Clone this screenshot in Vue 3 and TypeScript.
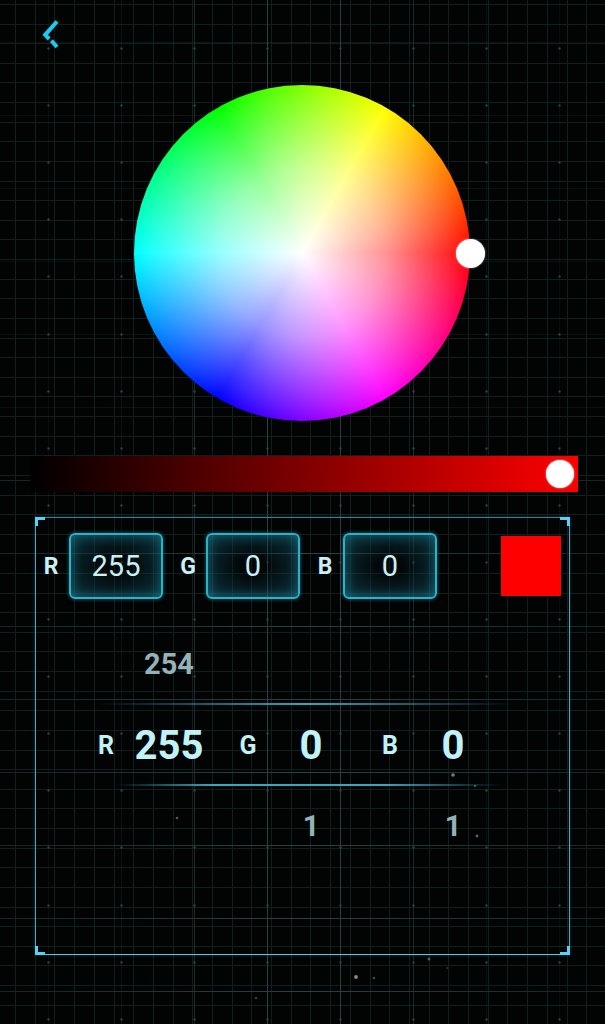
<template>
  <div class="page">
    <!-- background grid -->
    <svg class="bg" width="605" height="1024" viewBox="0 0 605 1024" aria-hidden="true">
      <defs>
        <linearGradient id="hfade" x1="0" y1="0" x2="605" y2="0" gradientUnits="userSpaceOnUse">
          <stop offset="0" stop-color="#162424" />
          <stop offset="0.5" stop-color="#2b4242" />
          <stop offset="1" stop-color="#162424" />
        </linearGradient>
      </defs>
      <line v-for="x in minorX" :key="'vm' + x" :x1="x" :x2="x" y1="0" y2="1024" class="minor" />
      <line v-for="y in minorY" :key="'hm' + y" x1="0" x2="605" :y1="y" :y2="y" class="minor" />
      <line v-for="m in majorX" :key="'vM' + m.x" :x1="m.x" :x2="m.x" y1="0" y2="1024" class="major" :opacity="m.o" />
      <rect v-for="m in majorY" :key="'hM' + m.y" x="0" :y="m.y" width="605" height="1" fill="url(#hfade)" :opacity="m.o" />
      <circle v-for="d in dots" :key="d.x + '-' + d.y" :cx="d.x" :cy="d.y" r="1.2" fill="#2f4040" />
      <circle v-for="s in stars" :key="'s' + s.x" :cx="s.x" :cy="s.y" :r="s.r" :fill="s.c" />
    </svg>

    <header class="top">
      <button type="button" class="back" aria-label="back">
        <svg width="20" height="30" viewBox="0 0 20 30">
          <path d="M16 1.5 4.2 14.8 8.2 19" fill="none" stroke="#19cdf0" stroke-width="4" />
          <path d="M10.4 20.6 16 27" fill="none" stroke="#19cdf0" stroke-width="4" />
        </svg>
      </button>
    </header>

    <div class="wheel-wrap">
      <div class="wheel">
        <span class="thumb wheel-thumb"></span>
      </div>
    </div>

    <div class="slider">
      <span class="thumb slider-thumb"></span>
    </div>

    <section class="panel">
      <i v-for="c in corners" :key="c" class="corner" :class="c"></i>

      <div class="fields">
        <div v-for="f in channels" :key="f.name" class="field">
          <label class="field-label">{{ f.name }}</label>
          <div class="field-box">{{ f.value }}</div>
        </div>
        <div class="swatch" :style="{ background: swatch }"></div>
      </div>

      <div class="drum">
        <div class="drum-row muted first">
          <div v-for="f in channels" :key="f.name" class="cell">
            <span class="cell-label"></span>
            <span class="cell-value prev">{{ f.value > 0 ? f.value - 1 : "" }}</span>
          </div>
        </div>
        <div class="rule rule-a"></div>
        <div class="drum-row current">
          <div v-for="f in channels" :key="f.name" class="cell">
            <span class="cell-label">{{ f.name }}</span>
            <span class="cell-value">{{ f.value }}</span>
          </div>
        </div>
        <div class="rule rule-b"></div>
        <div class="drum-row muted">
          <div v-for="f in channels" :key="f.name" class="cell">
            <span class="cell-label"></span>
            <span class="cell-value next">{{ f.value < 255 ? f.value + 1 : "" }}</span>
          </div>
        </div>
      </div>
    </section>
  </div>
</template>

<script setup lang="ts">
import { computed, ref } from "vue";

const r = ref(255);
const g = ref(0);
const b = ref(0);

const channels = computed(() => [
  { name: "R", value: r.value },
  { name: "G", value: g.value },
  { name: "B", value: b.value },
]);
const swatch = computed(() => `rgb(${r.value}, ${g.value}, ${b.value})`);

const corners = ["tl", "tr", "bl", "br"];

// grid of the backdrop
const range = (start: number, step: number, end: number) => {
  const out: number[] = [];
  for (let v = start; v < end; v += step) out.push(Math.round(v) + 0.5);
  return out;
};
const minorX = range(15, 19.7, 605);
const minorY = range(4, 19.62, 1024);
const majorX = range(47.6, 73, 605).map((x) => ({
  x,
  o: Math.max(0.15, 1 - Math.abs(x - 300) / 230),
}));
// horizontal ones get stronger towards the bottom of the page
const majorY = range(42, 73, 1024).map((v) => ({
  y: v - 0.5,
  o: v < 480 ? 0.35 : 1,
}));

const dots: { x: number; y: number }[] = [];
for (const x of range(47.6, 73, 605)) {
  for (const y of range(48, 57.1, 1024)) dots.push({ x, y });
}

const stars = [
  { x: 453, y: 775, r: 1.8, c: "#7a7a7a" },
  { x: 475, y: 786, r: 1.2, c: "#465050" },
  { x: 177, y: 818, r: 1.3, c: "#585858" },
  { x: 477, y: 836, r: 1.4, c: "#606060" },
  { x: 429, y: 959, r: 1.5, c: "#5a5a5a" },
  { x: 447, y: 968, r: 1, c: "#303030" },
  { x: 356, y: 977, r: 1.9, c: "#8a8a8a" },
  { x: 374, y: 978, r: 1.3, c: "#444444" },
  { x: 256, y: 998, r: 1.3, c: "#463838" },
];
</script>

<style scoped>
.page {
  position: relative;
  width: 605px;
  height: 1024px;
  overflow: hidden;
  background: #020303;
  font-family: Roboto, "Liberation Sans", sans-serif;
}
.bg {
  position: absolute;
  left: 0;
  top: 0;
  filter: blur(0.5px);
}
.minor {
  stroke: #101e1d;
  stroke-width: 1;
}
.major {
  stroke: #304c4c;
  stroke-width: 1;
}

.top {
  position: relative;
  height: 70px;
}
.back {
  display: block;
  padding: 0;
  margin: 0;
  border: none;
  background: none;
  position: relative;
  left: 41px;
  top: 20px;
  width: 20px;
  height: 30px;
  cursor: pointer;
}

.wheel-wrap {
  position: relative;
  margin-top: 15px;
  display: flex;
  justify-content: center;
}
.wheel {
  position: relative;
  width: 336px;
  height: 336px;
  margin-right: 1px;
  border-radius: 50%;
  background:
    radial-gradient(closest-side, #fff 0%, rgba(255, 255, 255, 0.58) 50%, rgba(255, 255, 255, 0.12) 90%, rgba(255, 255, 255, 0) 100%),
    conic-gradient(from 90deg, #f00, #f0f, #00f, #0ff, #0f0, #ff0, #f00);
}
.thumb {
  position: absolute;
  border-radius: 50%;
  background: #fff;
}
.wheel-thumb {
  width: 29px;
  height: 29px;
  right: -15px;
  top: 153.5px;
  box-shadow: 0 0 2px rgba(255, 255, 255, 0.6);
}

.slider {
  position: relative;
  margin: 35px 0 0 30px;
  width: 548px;
  height: 36px;
  background: linear-gradient(90deg, #000, #f00);
}
.slider-thumb {
  width: 28px;
  height: 28px;
  right: 4px;
  top: 4px;
  box-shadow: 0 0 2px rgba(255, 255, 255, 0.7);
}

.panel {
  position: relative;
  margin: 25px 0 0 35px;
  width: 535px;
  height: 438px;
  box-sizing: border-box;
  padding: 15px 8px 0 0;
  border: 1px solid #4aa9c0;
  border-top-color: #3f7f88;
  border-bottom-color: #62c4d8;
  box-shadow: 0 0 3px rgba(60, 170, 200, 0.35);
}
.corner {
  position: absolute;
  width: 7px;
  height: 6px;
  border: 0 solid #58d2f2;
}
.tl {
  left: -1px;
  top: -1px;
  border-width: 3px 0 0 3px;
}
.tr {
  right: -1px;
  top: -1px;
  border-width: 3px 3px 0 0;
}
.bl {
  left: -1px;
  bottom: -1px;
  border-width: 0 0 3px 3px;
}
.br {
  right: -1px;
  bottom: -1px;
  border-width: 0 3px 3px 0;
}

.fields {
  display: flex;
  align-items: center;
  gap: 10px;
}
.field {
  display: flex;
  align-items: center;
}
.field-label {
  width: 30px;
  margin-right: 3px;
  text-align: center;
  font-size: 23px;
  font-weight: 700;
  color: #c8f0f5;
}
.field-box {
  width: 94px;
  height: 66px;
  box-sizing: border-box;
  display: flex;
  align-items: center;
  justify-content: center;
  border: 2px solid #2bb2c8;
  border-radius: 6px;
  font-size: 29px;
  font-weight: 400;
  color: #c8f0f5;
  background: radial-gradient(ellipse at center, rgba(4, 16, 20, 0.3) 20%, rgba(20, 95, 115, 0.55) 100%);
  box-shadow: inset 0 0 12px rgba(45, 175, 200, 0.45), 0 0 4px rgba(45, 175, 200, 0.55);
}
.swatch {
  width: 60px;
  height: 60px;
  margin-left: auto;
}

.drum {
  margin-top: 25px;
  padding-left: 50px;
}
.drum-row {
  display: flex;
  gap: 16px;
  height: 80px;
  align-items: center;
}
.drum-row.first {
  height: 79px;
}
.cell {
  display: flex;
  align-items: center;
  width: 126px;
  height: 100%;
}
.cell-label {
  width: 40px;
  text-align: center;
  font-size: 25px;
  font-weight: 700;
  color: #c0f2f8;
}
.cell-value {
  width: 86px;
  text-align: center;
  font-weight: 700;
}
.muted .cell-value {
  font-size: 29px;
  color: #93b3b8;
}
.current .cell-value {
  font-size: 40px;
  color: #c0f2f8;
}
.rule {
  height: 2px;
}
.rule-a {
  margin-left: 10px;
  width: 420px;
  background: linear-gradient(90deg, rgba(58, 165, 190, 0), #3aa6c0 50%, rgba(58, 165, 190, 0));
}
.rule-b {
  margin-top: -1px;
  margin-left: 30px;
  width: 385px;
  background: linear-gradient(90deg, rgba(58, 165, 190, 0), #3aa6c0 25%, #3aa6c0 70%, rgba(58, 165, 190, 0));
}
</style>

<style>
html,
body {
  margin: 0;
  background: #020303;
}
</style>
